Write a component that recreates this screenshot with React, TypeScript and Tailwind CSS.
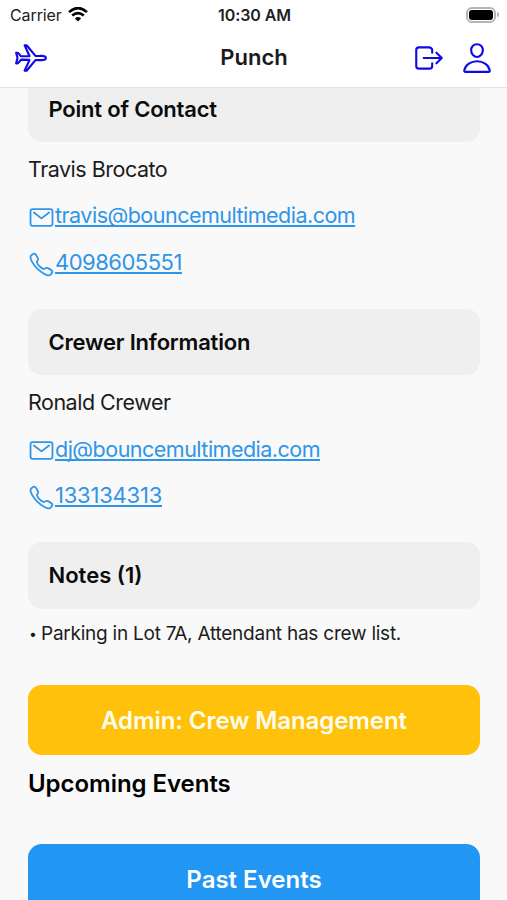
import React from "react";
import {
  IoAirplaneOutline,
  IoCallOutline,
  IoLogOutOutline,
  IoMailOutline,
  IoPersonOutline,
} from "react-icons/io5";

function SectionTitle({ children, className }: { children: React.ReactNode; className: string }) {
  return (
    <h2 className="flex h-[66.5px] items-center rounded-[14px] bg-[#efefef] pt-px pl-[20.5px] text-[22px] font-semibold text-[#0b0b0b]">
      <span className={className}>{children}</span>
    </h2>
  );
}

type ContactProps = {
  title: string;
  name: string;
  email: string;
  phone: string;
  phoneClass: string;
};

function Contact(p: ContactProps) {
  return (
    <section className="h-[233.25px]">
      <SectionTitle className="tracking-[-0.2px]">{p.title}</SectionTitle>
      <p className="mt-[3.5px] flex h-[47px] items-center text-[21.5px] tracking-[-0.5px] text-[#1c1c1c]">
        {p.name}
      </p>
      <a className="flex h-[46px] items-center text-[21.5px] text-[#2f95e8]">
        <IoMailOutline className="mt-[4px] size-[27px] shrink-0 [&_*]:[stroke-width:34px]" />
        <span className="tracking-[-0.51px] underline decoration-[1.5px] underline-offset-2 [text-decoration-skip-ink:none]">
          {p.email}
        </span>
      </a>
      <a className="flex h-[47px] items-center text-[22px] text-[#2f95e8]">
        <IoCallOutline className="mt-[4px] size-[27px] shrink-0 [&_*]:[stroke-width:34px]" />
        <span className={p.phoneClass}>{p.phone}</span>
      </a>
    </section>
  );
}

function WifiIcon() {
  return (
    <svg viewBox="0 0 20 15" className="ml-[6px] h-[15px] w-5" fill="none" stroke="#050505" strokeWidth="2.6">
      <path d="M1 5.1Q10-3 19 5.1" />
      <path d="M4.2 8.6Q10 3.6 15.8 8.6" />
      <path d="M10 14.5 6.9 11.4Q10 8.7 13.1 11.4Z" fill="#050505" stroke="none" />
    </svg>
  );
}

export default function App() {
  return (
    <div className="flex h-[900px] w-[507px] flex-col overflow-hidden bg-[#f9f9f9] font-['Inter','Liberation_Sans',sans-serif]">
      <header className="z-10 h-[88px] shrink-0 border-b border-[#e4e4e4] bg-white">
        <div className="grid h-[29px] grid-cols-3 items-center pr-[8px] pl-[10px] text-[#222]">
          <div className="flex items-center text-[16px]">
            <span className="tracking-[-0.1px]">Carrier</span>
            <WifiIcon />
          </div>
          <div className="text-center text-[16px] font-semibold tracking-[-0.1px]">10:30 AM</div>
          <div className="flex items-center justify-end">
            <div className="h-[16px] w-[30px] rounded-[6px] border-2 border-[#b5b5b5] p-px">
              <div className="h-full rounded-[3px] bg-black" />
            </div>
            <div className="ml-px h-[5px] w-[2px] rounded-r bg-[#b5b5b5]" />
          </div>
        </div>
        <div className="grid h-[57px] grid-cols-3 items-center pr-[13px] pl-[14px] text-[#100ae8]">
          <IoAirplaneOutline className="size-[34px]" />
          <h1 className="text-center text-[22px] font-semibold text-[#1b1b1d]">Punch</h1>
          <div className="flex items-center justify-end gap-[14px]">
            <IoLogOutOutline className="size-[34px]" />
            <IoPersonOutline className="size-[34px]" />
          </div>
        </div>
      </header>
      <main className="-mt-[12.5px] px-7 pr-[27px]">
        <Contact
          title="Point of Contact"
          name="Travis Brocato"
          email="travis@bouncemultimedia.com"
          phone="4098605551"
          phoneClass="tracking-[-0.5px] underline decoration-[1.5px] underline-offset-2"
        />
        <Contact
          title="Crewer Information"
          name="Ronald Crewer"
          email="dj@bouncemultimedia.com"
          phone="133134313"
          phoneClass="tracking-[-0.22px] underline decoration-[1.5px] underline-offset-2"
        />
        <SectionTitle className="">Notes (1)</SectionTitle>
        <p className="flex h-[50.5px] items-center text-[19px] tracking-[-0.24px] text-[#1c1c1c]">
          <span className="w-[13px] pl-px text-[14px]">•</span>
          <span>Parking in Lot 7A, Attendant has crew list.</span>
        </p>
        <button className="mt-[26px] flex h-[70px] w-full items-center justify-center rounded-[14px] bg-[#ffc10a] pt-px text-[24px] font-semibold tracking-[-0.08px] text-[#fffdf0]">
          Admin: Crew Management
        </button>
        <h2 className="flex h-[58px] items-center text-[24px] font-semibold tracking-[-0.04px] text-black">
          Upcoming Events
        </h2>
        <button className="mt-[31px] flex h-[71px] w-full items-center justify-center rounded-[14px] bg-[#2196f3] text-[24px] font-semibold text-white">
          Past Events
        </button>
      </main>
    </div>
  );
}
